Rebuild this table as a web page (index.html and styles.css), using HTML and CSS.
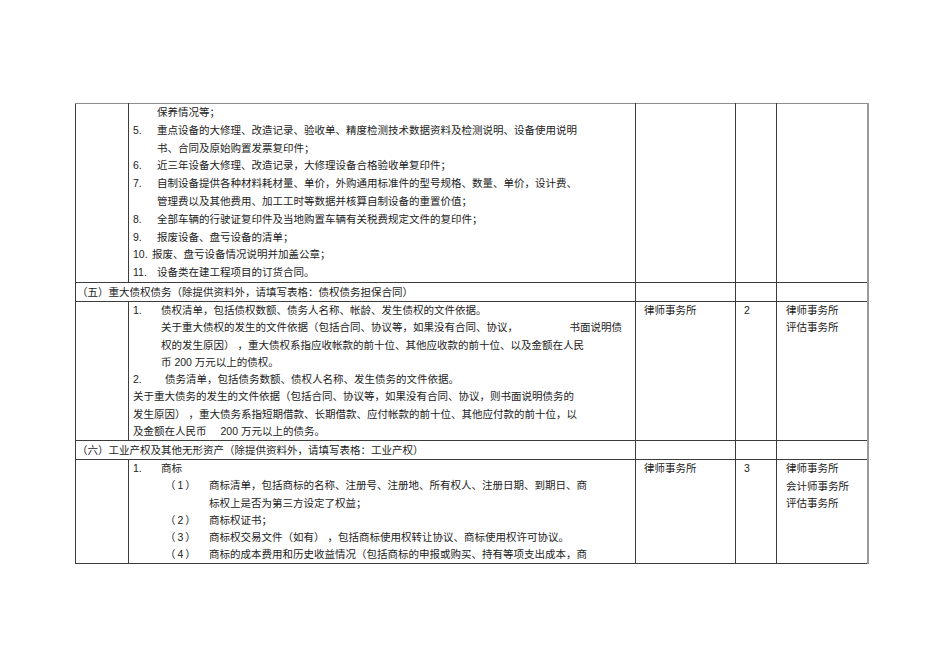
FILE: index.html
```html
<!DOCTYPE html>
<html lang="zh">
<head>
<meta charset="utf-8">
<link rel="stylesheet" href="styles.css">
</head>
<body>
<div class="page">
<table class="doc">
  <colgroup>
    <col class="c1"><col class="c2"><col class="c3"><col class="c4"><col class="c5">
  </colgroup>
  <tr class="r1">
    <td></td>
    <td class="items">
      <div class="ln"><span class="num w24"></span><span>保养情况等；</span></div>
      <div class="ln"><span class="num w24">5.</span><span>重点设备的大修理、改造记录、验收单、精度检测技术数据资料及检测说明、设备使用说明</span></div>
      <div class="ln"><span class="num w24"></span><span>书、合同及原始购置发票复印件；</span></div>
      <div class="ln"><span class="num w24">6.</span><span>近三年设备大修理、改造记录，大修理设备合格验收单复印件；</span></div>
      <div class="ln"><span class="num w24">7.</span><span>自制设备提供各种材料耗材量、单价，外购通用标准件的型号规格、数量、单价，设计费、</span></div>
      <div class="ln"><span class="num w24"></span><span>管理费以及其他费用、加工工时等数据并核算自制设备的重置价值；</span></div>
      <div class="ln"><span class="num w24">8.</span><span>全部车辆的行驶证复印件及当地购置车辆有关税费规定文件的复印件；</span></div>
      <div class="ln"><span class="num w24">9.</span><span>报废设备、盘亏设备的清单；</span></div>
      <div class="ln"><span class="num w19">10.</span><span>报废、盘亏设备情况说明并加盖公章；</span></div>
      <div class="ln"><span class="num w24">11.</span><span>设备类在建工程项目的订货合同。</span></div>
    </td>
    <td></td><td></td><td></td>
  </tr>
  <tr class="sec">
    <td colspan="2">（五）重大债权债务（除提供资料外，请填写表格：债权债务担保合同）</td>
    <td></td><td></td><td></td>
  </tr>
  <tr class="r2">
    <td></td>
    <td class="items">
      <div class="ln"><span class="num w28">1.</span><span>债权清单，包括债权数额、债务人名称、帐龄、发生债权的文件依据。</span></div>
      <div class="ln sub split"><span>关于重大债权的发生的文件依据（包括合同、协议等，如果没有合同、协议，</span><span>书面说明债</span></div>
      <div class="ln sub"><span>权的发生原因） ，重大债权系指应收帐款的前十位、其他应收款的前十位、以及金额在人民</span></div>
      <div class="ln sub"><span>币 200 万元以上的债权。</span></div>
      <div class="ln"><span class="num w32">2.</span><span>债务清单，包括债务数额、债权人名称、发生债务的文件依据。</span></div>
      <div class="ln"><span>关于重大债务的发生的文件依据（包括合同、协议等，如果没有合同、协议，则书面说明债务的</span></div>
      <div class="ln"><span>发生原因） ，重大债务系指短期借款、长期借款、应付帐款的前十位、其他应付款的前十位，以</span></div>
      <div class="ln"><span>及金额在人民币<span class="gap"></span>200 万元以上的债务。</span></div>
    </td>
    <td class="side">律师事务所</td>
    <td class="side">2</td>
    <td class="side wide">律师事务所<br>评估事务所</td>
  </tr>
  <tr class="sec">
    <td colspan="2">（六）工业产权及其他无形资产（除提供资料外，请填写表格：工业产权）</td>
    <td></td><td></td><td></td>
  </tr>
  <tr class="r3">
    <td></td>
    <td class="items">
      <div class="ln"><span class="num w28">1.</span><span>商标</span></div>
      <div class="ln deep"><span class="lab">（<span class="ln-n">1</span>）</span><span>商标清单，包括商标的名称、注册号、注册地、所有权人、注册日期、到期日、商</span></div>
      <div class="ln deep"><span class="lab"></span><span>标权上是否为第三方设定了权益；</span></div>
      <div class="ln deep"><span class="lab">（<span class="ln-n">2</span>）</span><span>商标权证书；</span></div>
      <div class="ln deep"><span class="lab">（<span class="ln-n">3</span>）</span><span>商标权交易文件（如有） ，包括商标使用权转让协议、商标使用权许可协议。</span></div>
      <div class="ln deep"><span class="lab">（<span class="ln-n">4</span>）</span><span>商标的成本费用和历史收益情况（包括商标的申报或购买、持有等项支出成本，商</span></div>
    </td>
    <td class="side">律师事务所</td>
    <td class="side">3</td>
    <td class="side wide">律师事务所<br>会计师事务所<br>评估事务所</td>
  </tr>
</table>
</div>
</body>
</html>
```

FILE: styles.css
```css
html, body {
  margin: 0;
  padding: 0;
  background: #ffffff;
}

body {
  font-family: "Liberation Sans", "Noto Sans CJK SC", sans-serif;
  font-size: 10.5px;
  color: #222222;
}

.page {
  padding: 103px 0 0 75px;
}

.doc {
  border-collapse: collapse;
  table-layout: fixed;
  width: 792px;
}

.c1 { width: 53px; }
.c2 { width: 507px; }
.c3 { width: 100px; }
.c4 { width: 41px; }
.c5 { width: 91px; }

.doc td {
  border: 1px solid #3c3c3c;
  vertical-align: top;
  padding: 0;
}

.doc tr:first-child td {
  border-top: 1px solid #8c8c8c;
}

.doc td:last-child {
  border-right: 2px solid #9a9a9a;
}

.items {
  padding: 0 13px 0 4px !important;
}

.ln {
  display: flex;
  white-space: nowrap;
}

.r1 .ln { line-height: 17.8px; }
.r2 .ln { line-height: 17.3px; }
.r3 .ln { line-height: 17.1px; }

.num {
  flex: none;
}

.w19 { width: 19px; }
.w24 { width: 24px; }
.w28 { width: 28px; }
.w32 { width: 32px; }

.sub {
  padding-left: 28px;
}

.split {
  justify-content: space-between;
}

.gap {
  display: inline-block;
  width: 14px;
}

.deep {
  padding-left: 32px;
}

.lab {
  flex: none;
  width: 44px;
}

.ln-n {
  padding: 0 2px;
}

.sec td {
  line-height: 18px;
  height: 18px;
}

.sec td:first-child {
  padding-left: 1px;
}

.side {
  padding: 0 0 0 8px !important;
  line-height: 17.3px;
}

.side.wide {
  padding-left: 9px !important;
}
```
